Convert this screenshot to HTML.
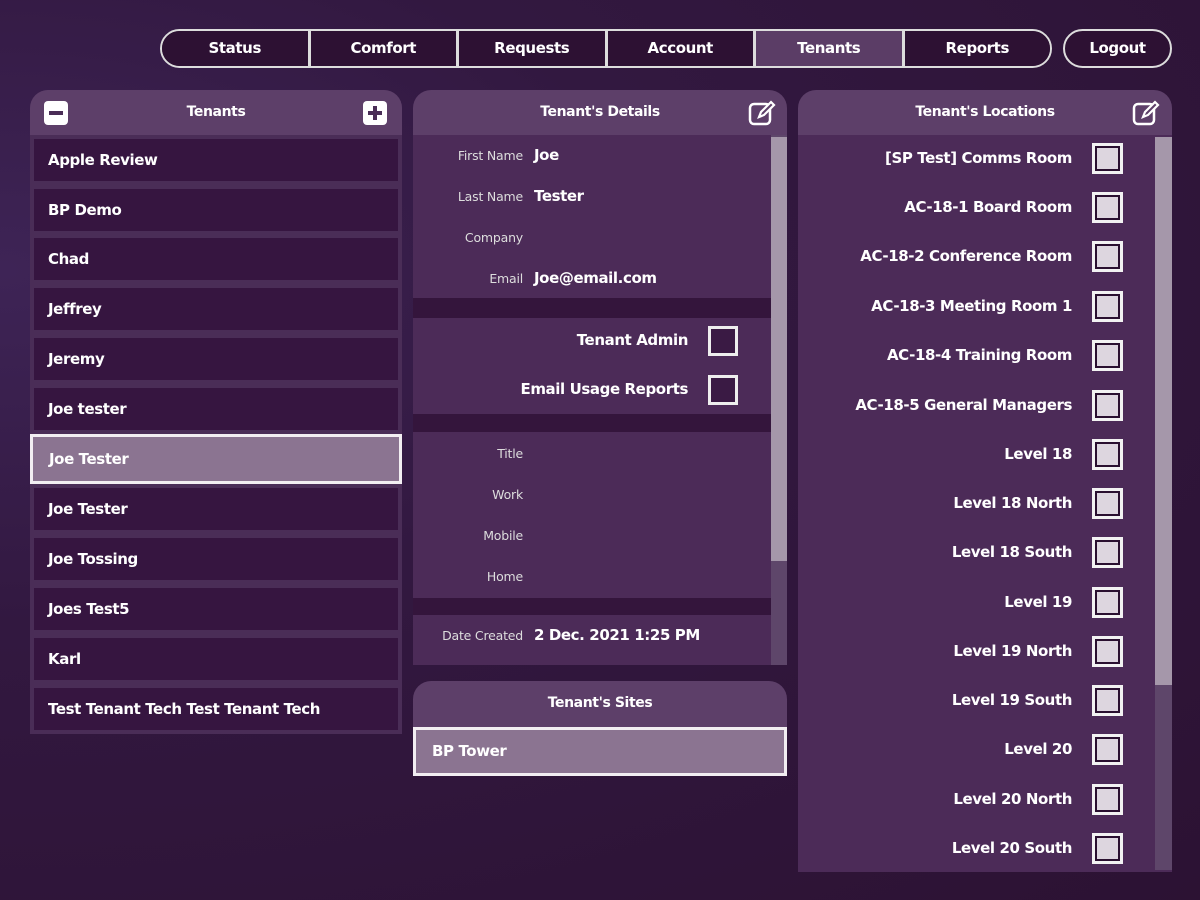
<!DOCTYPE html>
<html><head><meta charset="utf-8"><style>
*{box-sizing:border-box;margin:0;padding:0}
body{width:1200px;height:900px;overflow:hidden;position:relative;font-family:"DejaVu Sans","Liberation Sans",sans-serif;font-weight:bold;color:#fff;letter-spacing:-0.4px;
background:radial-gradient(ellipse at 0% 30%,#3e2456 0%,#321840 40%,#2c1233 100%);}
.a{position:absolute}
.nav{left:160px;top:29px;width:892px;height:39px;border:2px solid #ddd;border-radius:20px;overflow:hidden;display:flex;background:#2a1030}
.nav div{flex:1;text-align:center;line-height:35px;font-size:15px;border-left:3px solid #ddd;background:#2d1133}
.nav div:first-child{border-left:none}
.nav div.on{background:#5b3d66}
.logout{left:1063px;top:29px;width:109px;height:39px;border:2px solid #ddd;border-radius:20px;text-align:center;line-height:35px;font-size:15px;background:#2d1133}
.hdr{background:#5d3f69;border-radius:18px 18px 0 0;height:46px;text-align:center;line-height:44px;font-size:14px}
.item{left:30px;width:372px;height:50px;border:4px solid #4a2d57;background:#361540;font-size:15px;line-height:42px;padding-left:14px}
.sel{background:#8b7491;border:3px solid #f2eef2;line-height:44px;padding-left:16px}
.sec{background:#4c2b58}
.lbl{font-size:12.5px;font-weight:normal;color:#ddd;text-align:right;width:110px;letter-spacing:-0.2px}
.val{font-size:15px}
.cb{width:30px;height:30px;border:3px solid #eee;background:#3a1a44}
.lcb{width:31px;height:31px;border:3px solid #f2f2f2;background:#2a1030;padding:2px}
.lcb i{display:block;width:100%;height:100%;background:#ddd6df}
.loc{right:0;font-size:15px;text-align:right}
</style></head><body>
<div class="a nav"><div>Status</div><div>Comfort</div><div>Requests</div><div>Account</div><div class="on">Tenants</div><div>Reports</div></div>
<div class="a logout">Logout</div>

<div class="a" style="left:30px;top:90px;width:372px;height:644px;background:#4a2d57;border-radius:18px 18px 0 0"></div>
<div class="a hdr" style="left:30px;top:90px;width:372px">Tenants</div>
<div class="a" style="left:44px;top:101px;width:24px;height:24px;background:#fff;border-radius:4px"><div class="a" style="left:5px;top:10px;width:14px;height:4px;background:#4a2d57"></div></div>
<div class="a" style="left:363px;top:101px;width:24px;height:24px;background:#fff;border-radius:4px"><div class="a" style="left:5px;top:10px;width:14px;height:4px;background:#4a2d57"></div><div class="a" style="left:10px;top:5px;width:4px;height:14px;background:#4a2d57"></div></div>
<div class="a item" style="top:135px">Apple Review</div>
<div class="a item" style="top:185px">BP Demo</div>
<div class="a item" style="top:234px">Chad</div>
<div class="a item" style="top:284px">Jeffrey</div>
<div class="a item" style="top:334px">Jeremy</div>
<div class="a item" style="top:384px">Joe tester</div>
<div class="a item sel" style="top:434px">Joe Tester</div>
<div class="a item" style="top:484px">Joe Tester</div>
<div class="a item" style="top:534px">Joe Tossing</div>
<div class="a item" style="top:584px">Joes Test5</div>
<div class="a item" style="top:634px">Karl</div>
<div class="a item" style="top:684px">Test Tenant Tech Test Tenant Tech</div>

<div class="a hdr" style="left:413px;top:90px;width:374px">Tenant's Details</div>
<svg class="a" style="left:748px;top:99px" width="28" height="28" viewBox="0 0 28 28"><rect x="2" y="5" width="20" height="20" rx="4" fill="none" stroke="#fff" stroke-width="2.5"/><path d="M11 18l2-5 10-10 3 3-10 10z" fill="#5d3f69" stroke="#fff" stroke-width="2.2"/></svg>
<div class="a" style="left:413px;top:135px;width:374px;height:530px;background:#34153c"></div>
<div class="a sec" style="left:413px;top:135px;width:358px;height:163px"></div>
<div class="a sec" style="left:413px;top:318px;width:358px;height:96px"></div>
<div class="a sec" style="left:413px;top:432px;width:358px;height:166px"></div>
<div class="a sec" style="left:413px;top:615px;width:358px;height:50px"></div>
<div class="a" style="left:771px;top:135px;width:16px;height:530px;background:#5e466a"></div>
<div class="a" style="left:771px;top:137px;width:16px;height:424px;background:#a597aa"></div>

<div class="a lbl" style="left:413px;top:148px">First Name</div><div class="a val" style="left:534px;top:146px">Joe</div>
<div class="a lbl" style="left:413px;top:189px">Last Name</div><div class="a val" style="left:534px;top:187px">Tester</div>
<div class="a lbl" style="left:413px;top:230px">Company</div>
<div class="a lbl" style="left:413px;top:271px">Email</div><div class="a val" style="left:534px;top:269px">Joe@email.com</div>
<div class="a val" style="right:512px;top:331px;font-size:15px">Tenant Admin</div><div class="a cb" style="left:708px;top:326px"></div>
<div class="a val" style="right:512px;top:380px;font-size:15px">Email Usage Reports</div><div class="a cb" style="left:708px;top:375px"></div>
<div class="a lbl" style="left:413px;top:446px">Title</div>
<div class="a lbl" style="left:413px;top:487px">Work</div>
<div class="a lbl" style="left:413px;top:528px">Mobile</div>
<div class="a lbl" style="left:413px;top:569px">Home</div>
<div class="a lbl" style="left:413px;top:628px">Date Created</div><div class="a val" style="left:534px;top:626px">2 Dec. 2021 1:25 PM</div>

<div class="a hdr" style="left:413px;top:681px;width:374px">Tenant's Sites</div>
<div class="a" style="left:413px;top:727px;width:374px;height:49px;background:#8b7491;border:3px solid #f2eef2;font-size:15px;line-height:43px;padding-left:16px">BP Tower</div>

<div class="a hdr" style="left:798px;top:90px;width:374px">Tenant's Locations</div>
<svg class="a" style="left:1132px;top:99px" width="28" height="28" viewBox="0 0 28 28"><rect x="2" y="5" width="20" height="20" rx="4" fill="none" stroke="#fff" stroke-width="2.5"/><path d="M11 18l2-5 10-10 3 3-10 10z" fill="#5d3f69" stroke="#fff" stroke-width="2.2"/></svg>
<div class="a" style="left:798px;top:135px;width:374px;height:737px;background:#4c2b58"></div>
<div class="a" style="left:1155px;top:137px;width:17px;height:733px;background:#5e466a"></div>
<div class="a" style="left:1155px;top:137px;width:17px;height:548px;background:#a597aa"></div>
<div class="a" style="left:798px;top:135px;width:274px;height:737px">
<div class="a loc" style="top:14px">[SP Test] Comms Room</div>
<div class="a loc" style="top:63px">AC-18-1 Board Room</div>
<div class="a loc" style="top:112px">AC-18-2 Conference Room</div>
<div class="a loc" style="top:162px">AC-18-3 Meeting Room 1</div>
<div class="a loc" style="top:211px">AC-18-4 Training Room</div>
<div class="a loc" style="top:261px">AC-18-5 General Managers</div>
<div class="a loc" style="top:310px">Level 18</div>
<div class="a loc" style="top:359px">Level 18 North</div>
<div class="a loc" style="top:408px">Level 18 South</div>
<div class="a loc" style="top:458px">Level 19</div>
<div class="a loc" style="top:507px">Level 19 North</div>
<div class="a loc" style="top:556px">Level 19 South</div>
<div class="a loc" style="top:605px">Level 20</div>
<div class="a loc" style="top:655px">Level 20 North</div>
<div class="a loc" style="top:704px">Level 20 South</div>
</div>
<div class="a lcb" style="left:1092px;top:143px"><i></i></div>
<div class="a lcb" style="left:1092px;top:192px"><i></i></div>
<div class="a lcb" style="left:1092px;top:241px"><i></i></div>
<div class="a lcb" style="left:1092px;top:291px"><i></i></div>
<div class="a lcb" style="left:1092px;top:340px"><i></i></div>
<div class="a lcb" style="left:1092px;top:390px"><i></i></div>
<div class="a lcb" style="left:1092px;top:439px"><i></i></div>
<div class="a lcb" style="left:1092px;top:488px"><i></i></div>
<div class="a lcb" style="left:1092px;top:537px"><i></i></div>
<div class="a lcb" style="left:1092px;top:587px"><i></i></div>
<div class="a lcb" style="left:1092px;top:636px"><i></i></div>
<div class="a lcb" style="left:1092px;top:685px"><i></i></div>
<div class="a lcb" style="left:1092px;top:734px"><i></i></div>
<div class="a lcb" style="left:1092px;top:784px"><i></i></div>
<div class="a lcb" style="left:1092px;top:833px"><i></i></div>
</body></html>
